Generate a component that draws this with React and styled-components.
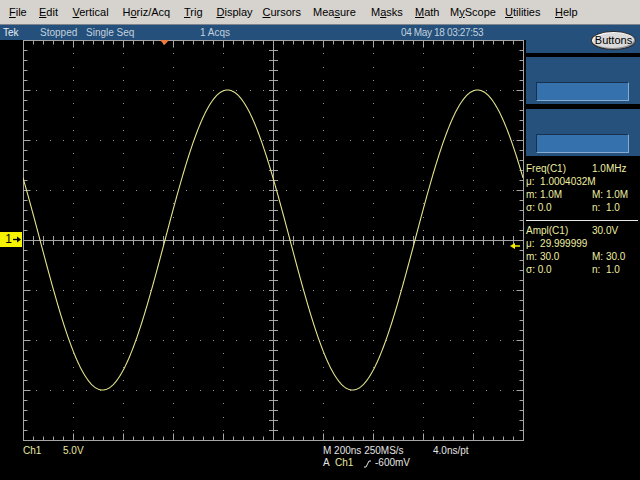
import React from "react";
import styled, { createGlobalStyle } from "styled-components";

const GlobalStyle = createGlobalStyle`
  body {
    margin: 0;
    background: #000;
    overflow: hidden;
  }
  #root {
    width: 640px;
    height: 480px;
  }
`;

const menus = [
  { label: "File", u: 0, w: 30 },
  { label: "Edit", u: 0, w: 33.5 },
  { label: "Vertical", u: 0, w: 50 },
  { label: "Horiz/Acq", u: 1, w: 61.5 },
  { label: "Trig", u: 0, w: 32.5 },
  { label: "Display", u: 0, w: 46 },
  { label: "Cursors", u: 0, w: 50.5 },
  { label: "Measure", u: 3, w: 58 },
  { label: "Masks", u: 1, w: 44 },
  { label: "Math", u: 0, w: 35 },
  { label: "MyScope", u: 1, w: 55 },
  { label: "Utilities", u: 0, w: 50 },
  { label: "Help", u: 0, w: 30 },
];

// graticule is 500 x 400 px, 50 px per division
const GW = 500;
const GH = 400;

function buildTicks() {
  let d = "";
  for (let x = 10; x < GW; x += 10) {
    const len = x % 50 === 0 ? 7 : 4;
    d += `M${x + 0.5} 0.5v${len}M${x + 0.5} ${GH + 0.5}v-${len}`;
    if (x !== 250) d += `M${x + 0.5} ${GH / 2 - 4}v9`;
  }
  for (let y = 10; y < GH; y += 10) {
    const len = y % 50 === 0 ? 7 : 4;
    d += `M0.5 ${y + 0.5}h${len}M${GW + 0.5} ${y + 0.5}h-${len}`;
    if (y !== 200) d += `M${GW / 2 - 4} ${y + 0.5}h9`;
  }
  d += `M250.5 0V${GH + 1}M0 200.5H${GW + 1}`;
  return d;
}

function buildDots() {
  const dots = [];
  const offs = [0, 13, 27, 40];
  for (let x = 50; x < GW; x += 50) {
    if (x === 250) continue;
    for (let y0 = 0; y0 < GH; y0 += 50) {
      offs.forEach((o) => {
        if (y0 + o > 0) dots.push([x, y0 + o]);
      });
    }
  }
  for (let y = 50; y < GH; y += 50) {
    if (y === 200) continue;
    for (let x0 = 0; x0 < GW; x0 += 50) {
      offs.forEach((o) => {
        if (x0 + o > 0) dots.push([x0 + o, y]);
      });
    }
  }
  return dots;
}

function buildTrace() {
  const pts = [];
  for (let x = 0; x <= GW; x += 0.5) {
    const y = 200 - 150 * Math.sin((2 * Math.PI * (x + 23 - 165)) / 250);
    pts.push(`${x.toFixed(1)},${y.toFixed(2)}`);
  }
  return "M" + pts.join("L");
}

const ticks = buildTicks();
const dots = buildDots();
const trace = buildTrace();

function Graticule() {
  return (
    <svg width={GW + 1} height={GH + 1} style={{ display: "block" }}>
      <rect x="0.5" y="0.5" width={GW} height={GH} fill="none" stroke="#a6a6a6" />
      <path d={ticks} stroke="#a6a6a6" fill="none" />
      {dots.map(([x, y], i) => (
        <rect key={i} x={x} y={y} width="1" height="1" fill="#8e8e8e" />
      ))}
      <path d={trace} stroke="#e4e48e" strokeWidth="1.1" fill="none" />
      <polygon points="137,0 146,0 141.5,5" fill="#f07a3c" />
      <polygon points="487,206 492,203 492,209" fill="#f4f000" />
      <path d="M491 206H497" stroke="#f4f000" strokeWidth="1.5" />
    </svg>
  );
}

function App() {
  return (
    <>
      <GlobalStyle />
      <Frame>
        <MenuBar>
          {menus.map((m) => (
            <MenuItem key={m.label} $w={m.w}>
              {m.label.slice(0, m.u)}
              <Mnemonic>{m.label[m.u]}</Mnemonic>
              {m.label.slice(m.u + 1)}
            </MenuItem>
          ))}
        </MenuBar>
        <Body>
          <ScopeColumn>
            <StatusBar>
              <StatusText $x={3} $color="#e6edf4">Tek</StatusText>
              <StatusText $x={40}>Stopped</StatusText>
              <StatusText $x={86}>Single Seq</StatusText>
              <StatusText $x={200}>1 Acqs</StatusText>
              <StatusText $x={401} $tight>04 May 18 03:27:53</StatusText>
            </StatusBar>
            <Screen>
              <Graticule />
              <ChannelMarker>
                1
                <svg width="8" height="7" viewBox="0 0 8 7">
                  <path d="M0 3.5H5" stroke="#000" strokeWidth="1.3" />
                  <polygon points="8,3.5 4,0.5 4,6.5" fill="#000" />
                </svg>
              </ChannelMarker>
            </Screen>
            <Readouts>
              <ChannelReadout>
                <Cell $w={40} $color="#e8e8a4">Ch1</Cell>
                <Cell $color="#e8e8a4">5.0V</Cell>
              </ChannelReadout>
              <Timebase>
                <ReadoutRow>
                  <Cell $w={110}>M 200ns 250MS/s</Cell>
                  <Cell>4.0ns/pt</Cell>
                </ReadoutRow>
                <ReadoutRow>
                  <Cell $w={12}>A</Cell>
                  <Cell $w={28} $color="#e8e8a4">Ch1</Cell>
                  <SlopeIcon width="11" height="9" viewBox="0 0 11 9">
                    <path d="M1 8H3L6 2H8" stroke="#e4e4e4" fill="none" />
                  </SlopeIcon>
                  <Cell>-600mV</Cell>
                </ReadoutRow>
              </Timebase>
            </Readouts>
          </ScopeColumn>
          <SidePanel>
            <PanelHeader>
              <PillButton>Buttons</PillButton>
            </PanelHeader>
            <ControlBox>
              <Field />
            </ControlBox>
            <ControlBox>
              <Field />
            </ControlBox>
            <Measurements>
              <MeasRow>
                <span>Freq(C1)</span>
                <span>1.0MHz</span>
              </MeasRow>
              <MeasRow>
                <Wide>μ:&nbsp; 1.0004032M</Wide>
              </MeasRow>
              <MeasRow>
                <span>m: 1.0M</span>
                <span>M: 1.0M</span>
              </MeasRow>
              <MeasRow>
                <span>σ: 0.0</span>
                <span>n:&nbsp; 1.0</span>
              </MeasRow>
              <Separator />
              <MeasRow>
                <span>Ampl(C1)</span>
                <span>30.0V</span>
              </MeasRow>
              <MeasRow>
                <Wide>μ:&nbsp; 29.999999</Wide>
              </MeasRow>
              <MeasRow>
                <span>m: 30.0</span>
                <span>M: 30.0</span>
              </MeasRow>
              <MeasRow>
                <span>σ: 0.0</span>
                <span>n:&nbsp; 1.0</span>
              </MeasRow>
            </Measurements>
          </SidePanel>
        </Body>
      </Frame>
    </>
  );
}

export default App;

const Frame = styled.div`
  width: 640px;
  height: 480px;
  background: #000;
  display: flex;
  flex-direction: column;
  font-family: "Liberation Sans", Arial, sans-serif;
`;

const MenuBar = styled.div`
  height: 25px;
  box-sizing: border-box;
  background: #d6d3ce;
  border-bottom: 1px solid #7d848c;
  display: flex;
  align-items: center;
  padding-left: 9px;
  font-size: 11px;
  color: #000;
`;

const MenuItem = styled.div`
  width: ${(p) => p.$w}px;
  flex-shrink: 0;
  white-space: nowrap;
  padding-bottom: 1px;
`;

const Mnemonic = styled.span`
  text-decoration: underline;
  text-underline-offset: 1px;
`;

const Body = styled.div`
  flex: 1;
  display: flex;
`;

const ScopeColumn = styled.div`
  width: 526px;
  display: flex;
  flex-direction: column;
`;

const StatusBar = styled.div`
  height: 15px;
  background: #24507b;
  position: relative;
  font-size: 10px;
  line-height: 15px;
`;

const StatusText = styled.span`
  position: absolute;
  left: ${(p) => p.$x}px;
  top: 0;
  color: ${(p) => p.$color || "#c3d0dd"};
  letter-spacing: ${(p) => (p.$tight ? "-0.35px" : "0")};
  white-space: nowrap;
`;

const Screen = styled.div`
  position: relative;
  padding-left: 23px;
`;

const ChannelMarker = styled.div`
  position: absolute;
  left: 0;
  top: 192px;
  width: 22px;
  height: 15px;
  background: #f6f400;
  color: #000;
  font-size: 12px;
  line-height: 15px;
  display: flex;
  align-items: center;
  justify-content: flex-end;
  gap: 1px;
  padding-right: 1px;
  box-sizing: border-box;
`;

const Readouts = styled.div`
  display: flex;
  padding-left: 23px;
  margin-top: 4px;
  font-size: 10px;
  line-height: 12px;
`;

const ChannelReadout = styled.div`
  width: 300px;
  display: flex;
  align-items: flex-start;
`;

const Timebase = styled.div`
  display: flex;
  flex-direction: column;
`;

const ReadoutRow = styled.div`
  display: flex;
  align-items: center;
`;

const Cell = styled.span`
  width: ${(p) => (p.$w ? `${p.$w}px` : "auto")};
  color: ${(p) => p.$color || "#e4e4e4"};
  white-space: nowrap;
`;

const SlopeIcon = styled.svg`
  display: block;
  margin-right: 1px;
`;

const SidePanel = styled.div`
  width: 114px;
  display: flex;
  flex-direction: column;
`;

const PanelHeader = styled.div`
  height: 28px;
  background: #24507b;
  display: flex;
  justify-content: flex-end;
  align-items: flex-start;
  padding: 6px 4px 0 0;
  box-sizing: border-box;
  margin-bottom: 4px;
`;

const PillButton = styled.div`
  width: 45px;
  height: 19px;
  box-sizing: border-box;
  border-radius: 50%;
  background: #dadada;
  border: 1px solid #2a2a2a;
  box-shadow: inset -1px -1px 0 #8c8c8c, inset 1px 1px 0 #ffffff;
  font-size: 11px;
  line-height: 17px;
  text-align: center;
  color: #000;
`;

const ControlBox = styled.div`
  height: 47px;
  background: #26517d;
  margin-bottom: 5px;
  padding: 25px 11px 0 10px;
  box-sizing: border-box;
`;

const Field = styled.div`
  height: 19px;
  background: #3572ad;
  border-top: 1px solid #17304d;
  border-left: 1px solid #17304d;
  border-bottom: 1px solid #86aad0;
  border-right: 1px solid #86aad0;
  box-sizing: border-box;
`;

const Measurements = styled.div`
  padding-top: 1px;
  font-size: 10px;
  line-height: 13px;
  color: #eeeea0;
`;

const MeasRow = styled.div`
  display: grid;
  grid-template-columns: 66px auto;
  white-space: nowrap;
`;

const Wide = styled.span`
  grid-column: 1 / 3;
`;

const Separator = styled.div`
  height: 1px;
  width: 112px;
  background: #e8e8e8;
  margin: 6px 0 3px;
`;
